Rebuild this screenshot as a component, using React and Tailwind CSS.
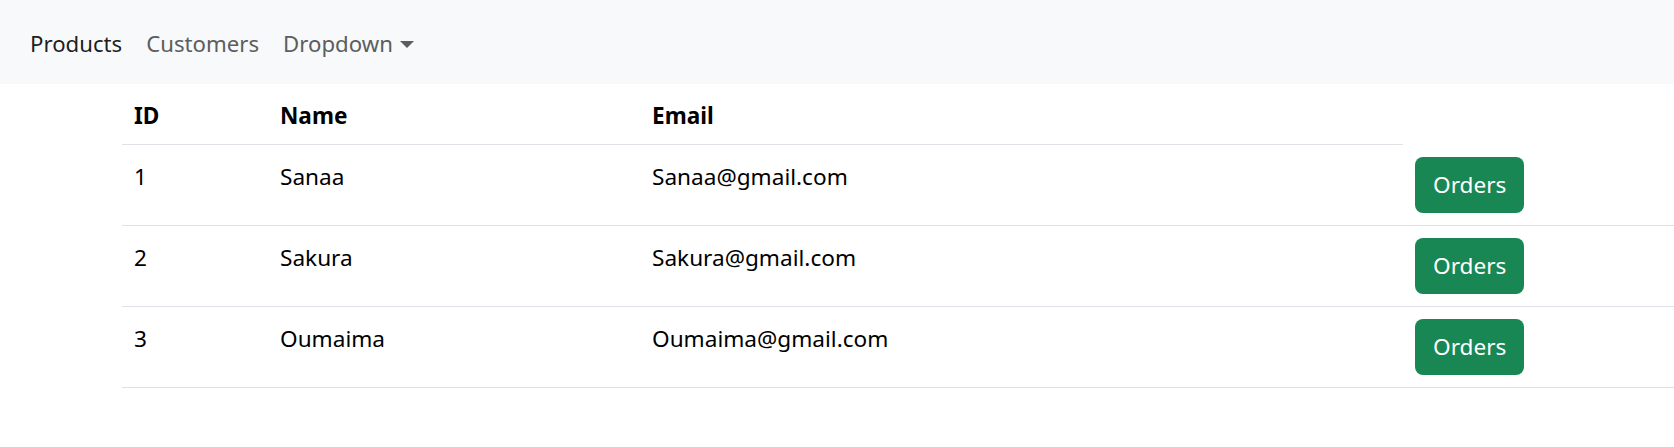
const CUSTOMERS = [
  { id: 1, name: 'Sanaa', email: 'Sanaa@gmail.com' },
  { id: 2, name: 'Sakura', email: 'Sakura@gmail.com' },
  { id: 3, name: 'Oumaima', email: 'Oumaima@gmail.com' },
];

export default function App() {
  return (
    <div className="min-h-screen bg-white text-[#212529] text-[22.6px] leading-[36px] [font-family:'Noto_Sans','Open_Sans',sans-serif]">
      {/* Navbar */}
      <nav className="bg-[#f8f9fa] h-[84px] px-[18px] flex items-center text-[22.2px]">
        <ul className="flex items-center pt-[4px]">
          <li>
            <a className="block px-[12px] py-[12px] text-black/90">Products</a>
          </li>
          <li>
            <a className="block px-[12px] py-[12px] text-[#5c5d5e]">Customers</a>
          </li>
          <li>
            <a className="flex items-center px-[12px] py-[12px] text-[#5c5d5e]">
              Dropdown
              <span className="ml-[7px] mt-[1px] w-0 h-0 border-t-[7px] border-t-[#5c5d5e] border-x-[7px] border-x-transparent" />
            </a>
          </li>
        </ul>
      </nav>

      {/* Table */}
      <div className="ml-[122px] overflow-hidden text-black">
        <div className="flex border-b border-[#dee2e6] w-[1281px] h-[61px] font-bold">
          <div className="w-[146px] px-[12px] pt-[14px]">ID</div>
          <div className="w-[372px] px-[12px] pt-[14px]">Name</div>
          <div className="w-[763px] px-[12px] pt-[14px]">Email</div>
        </div>
        {CUSTOMERS.map(c => (
          <div key={c.id} className="flex border-b border-[#dee2e6]">
            <div className="w-[146px] shrink-0 px-[12px] pt-[14px]">{c.id}</div>
            <div className="w-[372px] shrink-0 px-[12px] pt-[14px]">{c.name}</div>
            <div className="w-[763px] shrink-0 px-[12px] pt-[14px]">{c.email}</div>
            <div className="flex-1 p-[12px]">
              <button className="bg-[#198754] text-white h-[56px] px-[18px] rounded-[8px] leading-[36px]">
                Orders
              </button>
            </div>
          </div>
        ))}
      </div>
    </div>
  );
}
